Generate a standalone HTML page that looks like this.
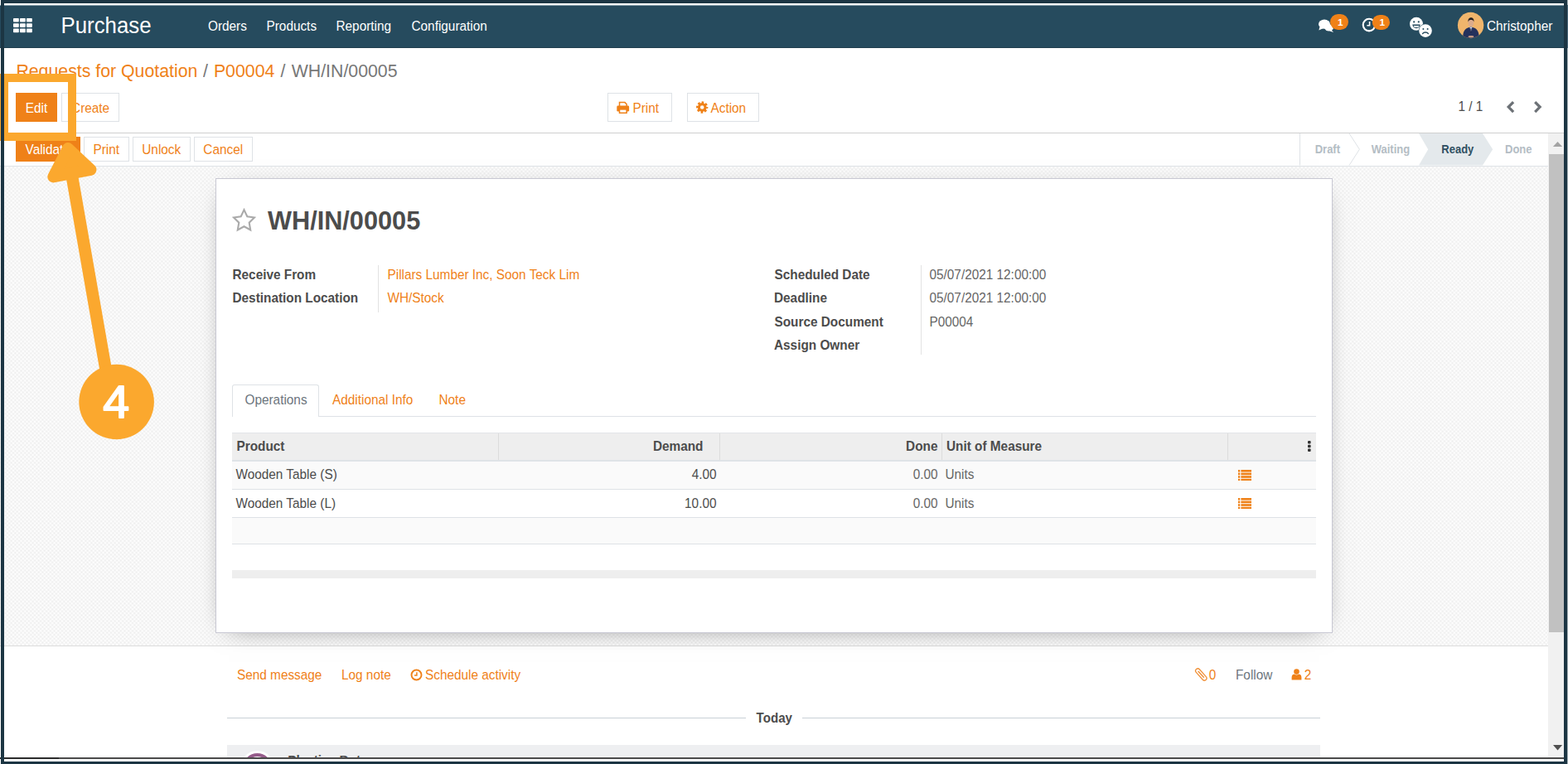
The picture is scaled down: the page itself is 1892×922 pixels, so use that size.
<!DOCTYPE html>
<html lang="en"><head><meta charset="utf-8"><title>Purchase - WH/IN/00005</title>
<style>
*{box-sizing:border-box;margin:0;padding:0}
html,body{width:1892px;height:922px;overflow:hidden;background:#fff}
body{position:relative;font-family:"Liberation Sans",Arial,Helvetica,sans-serif;color:#4c4c4c}
.b{position:absolute;display:block}
.t{position:absolute;white-space:pre;display:block}
header,section{display:contents}
.sheetbg{background-color:#f8f8f8;background-image:radial-gradient(circle,rgba(237,237,237,.95) 0,rgba(239,239,239,.6) 30%,rgba(248,248,248,0) 52%),radial-gradient(circle,rgba(237,237,237,.95) 0,rgba(239,239,239,.6) 30%,rgba(248,248,248,0) 52%),radial-gradient(circle,rgba(255,255,255,.98) 0,rgba(255,255,255,.6) 30%,rgba(248,248,248,0) 52%),radial-gradient(circle,rgba(255,255,255,.98) 0,rgba(255,255,255,.6) 30%,rgba(248,248,248,0) 52%);background-size:4.72px 4.72px;background-position:-0.5px -0.2px,1.86px 2.16px,1.86px -0.2px,-0.5px 2.16px}
</style></head>
<body>
<header class="nav">
<div class="b " style="left:0px;top:7px;width:1892.00px;height:51.00px;background:#264b5e;"></div>
<div class="b " style="left:0px;top:57px;width:1892.00px;height:1.00px;background:#1f3d4e;"></div>
<svg class="b" style="left:16.25px;top:22px" width="23" height="17.5" viewBox="0 0 23 17.5"><g fill="#fff"><rect x="0" y="0" width="6.8" height="4.6" rx="0.8"/><rect x="8" y="0" width="6.8" height="4.6" rx="0.8"/><rect x="16" y="0" width="6.8" height="4.6" rx="0.8"/><rect x="0" y="6.3" width="6.8" height="4.6" rx="0.8"/><rect x="8" y="6.3" width="6.8" height="4.6" rx="0.8"/><rect x="16" y="6.3" width="6.8" height="4.6" rx="0.8"/><rect x="0" y="12.6" width="6.8" height="4.6" rx="0.8"/><rect x="8" y="12.6" width="6.8" height="4.6" rx="0.8"/><rect x="16" y="12.6" width="6.8" height="4.6" rx="0.8"/></g></svg>
<span class="t " style="left:73.50px;top:19.00px;font-size:25.8px;line-height:25.8px;color:#fff;transform:scaleY(1.035);transform-origin:0 21px;">Purchase</span>
<span class="t " style="left:251.00px;top:24.00px;font-size:15.35px;line-height:15.35px;color:#fff;transform:scaleY(1.07);transform-origin:0 13px;">Orders</span>
<span class="t " style="left:321.50px;top:24.00px;font-size:15.35px;line-height:15.35px;color:#fff;transform:scaleY(1.07);transform-origin:0 13px;">Products</span>
<span class="t " style="left:405.50px;top:24.00px;font-size:15.35px;line-height:15.35px;color:#fff;transform:scaleY(1.07);transform-origin:0 13px;">Reporting</span>
<span class="t " style="left:496.50px;top:24.00px;font-size:15.35px;line-height:15.35px;color:#fff;transform:scaleY(1.07);transform-origin:0 13px;">Configuration</span>
<span class="t " style="left:1794.00px;top:24.00px;font-size:15.35px;line-height:15.35px;color:#fff;transform:scaleY(1.07);transform-origin:0 13px;">Christopher</span>
</header>
<section class="cp">
<nav class="crumbs" style="display:contents">
<span class="t " style="left:19.40px;top:76.00px;font-size:21.3px;line-height:21.3px;color:#ef8118;transform:scaleY(1.075);transform-origin:0 17px;">Requests for Quotation</span>
<span class="t " style="left:245.10px;top:76.00px;font-size:21.3px;line-height:21.3px;color:#777;transform:scaleY(1.075);transform-origin:0 17px;">/</span>
<span class="t " style="left:257.90px;top:76.00px;font-size:21.3px;line-height:21.3px;color:#ef8118;transform:scaleY(1.075);transform-origin:0 17px;">P00004</span>
<span class="t " style="left:338.50px;top:76.00px;font-size:21.3px;line-height:21.3px;color:#777;transform:scaleY(1.075);transform-origin:0 17px;">/</span>
<span class="t " style="left:351.70px;top:76.00px;font-size:21.3px;line-height:21.3px;color:#777;transform:scaleY(1.075);transform-origin:0 17px;">WH/IN/00005</span>
</nav>
<div class="b " style="left:19px;top:112px;width:50.00px;height:35.00px;background:#ef8118;"></div>
<span class="t " style="left:30.78px;top:123.00px;font-size:15.35px;line-height:15.35px;color:#fff;transform:scaleY(1.07);transform-origin:0 13px;">Edit</span>
<div class="b " style="left:74px;top:112px;width:69.75px;height:35.00px;border:1px solid #dee2e6;background:#fff;"></div>
<span class="t " style="left:86.09px;top:123.00px;font-size:15.35px;line-height:15.35px;color:#ef8118;transform:scaleY(1.07);transform-origin:0 13px;">Create</span>
<div class="b " style="left:733px;top:112px;width:77.50px;height:35.00px;border:1px solid #dee2e6;background:#fff;"></div>
<span class="t " style="left:763.50px;top:123.00px;font-size:15.35px;line-height:15.35px;color:#ef8118;transform:scaleY(1.07);transform-origin:0 13px;">Print</span>
<div class="b " style="left:829px;top:112px;width:87.00px;height:35.00px;border:1px solid #dee2e6;background:#fff;"></div>
<span class="t " style="left:857.50px;top:123.00px;font-size:15.35px;line-height:15.35px;color:#ef8118;transform:scaleY(1.07);transform-origin:0 13px;">Action</span>
<span class="t " style="left:1759.50px;top:121.00px;font-size:15.35px;line-height:15.35px;color:#4c4c4c;transform:scaleY(1.07);transform-origin:0 13px;">1 / 1</span>
<div class="b " style="left:0px;top:160px;width:1887.00px;height:1.00px;background:#cfcfcf;"></div>
</section>
<section class="sb">
<div class="b " style="left:19px;top:165px;width:77.50px;height:30.00px;background:#ef8118;"></div>
<span class="t " style="left:30.58px;top:173.00px;font-size:15.35px;line-height:15.35px;color:#fff;transform:scaleY(1.07);transform-origin:0 13px;">Validate</span>
<div class="b " style="left:101px;top:165px;width:54.50px;height:30.00px;border:1px solid #dee2e6;background:#fff;"></div>
<span class="t " style="left:112.47px;top:173.00px;font-size:15.35px;line-height:15.35px;color:#ef8118;transform:scaleY(1.07);transform-origin:0 13px;">Print</span>
<div class="b " style="left:160px;top:165px;width:69.50px;height:30.00px;border:1px solid #dee2e6;background:#fff;"></div>
<span class="t " style="left:171.27px;top:173.00px;font-size:15.35px;line-height:15.35px;color:#ef8118;transform:scaleY(1.07);transform-origin:0 13px;">Unlock</span>
<div class="b " style="left:234px;top:165px;width:70.50px;height:30.00px;border:1px solid #dee2e6;background:#fff;"></div>
<span class="t " style="left:245.36px;top:173.00px;font-size:15.35px;line-height:15.35px;color:#ef8118;transform:scaleY(1.07);transform-origin:0 13px;">Cancel</span>
</section>
<svg class="b" style="left:1560px;top:161px" width="308" height="39" viewBox="1560 161 308 39"><path d="M1568.5 161V199.5" stroke="#dee2e6" stroke-width="1" fill="none"/><path d="M1628 161L1640.4 180.2L1628 199.5" stroke="#dee2e6" stroke-width="1" fill="none"/><path d="M1712 161H1789L1801.2 180.2L1789 199.5H1712L1723.2 180.2Z" fill="#e4e9ec"/></svg>
<span class="t " style="left:1586.70px;top:174.00px;font-size:13.0px;line-height:13.0px;color:#b4bdc4;font-weight:700;transform:scaleY(1.07);transform-origin:0 11px;">Draft</span>
<span class="t " style="left:1654.70px;top:174.00px;font-size:13.0px;line-height:13.0px;color:#b4bdc4;font-weight:700;transform:scaleY(1.07);transform-origin:0 11px;">Waiting</span>
<span class="t " style="left:1739.30px;top:174.00px;font-size:13.0px;line-height:13.0px;color:#2f4f62;font-weight:700;transform:scaleY(1.07);transform-origin:0 11px;">Ready</span>
<span class="t " style="left:1816.00px;top:174.00px;font-size:13.0px;line-height:13.0px;color:#b4bdc4;font-weight:700;transform:scaleY(1.07);transform-origin:0 11px;">Done</span>
<div class="b sheetbg" style="left:0px;top:199.5px;width:1868.00px;height:580.00px;"></div>
<div class="b " style="left:0px;top:199.5px;width:1868.00px;height:1.00px;background:#dfe3e7;"></div>
<div class="b " style="left:0px;top:779px;width:1868.00px;height:1.00px;background:#dcdcdc;"></div>
<div class="b sheet" style="left:260px;top:215px;width:1347.50px;height:549.00px;background:#fff;border:1px solid #c8c8d3;box-shadow:0 6px 30px -16px rgba(0,0,0,.6);"></div>
<svg class="b" style="left:280px;top:251px" width="29" height="29" viewBox="0 0 29 29"><path d="M14.5 2.2L18.3 10.3L27 11.5L20.7 17.7L22.2 26.5L14.5 22.3L6.8 26.5L8.3 17.7L2 11.5L10.7 10.3Z" fill="none" stroke="#aaa" stroke-width="2.1" stroke-linejoin="miter"/></svg>
<span class="t " style="left:323.00px;top:252.00px;font-size:30.7px;line-height:30.7px;color:#4c4c4c;font-weight:700;">WH/IN/00005</span>
<span class="t " style="left:280.50px;top:324.00px;font-size:15.35px;line-height:15.35px;color:#4c4c4c;font-weight:700;transform:scaleY(1.07);transform-origin:0 13px;">Receive From</span>
<span class="t " style="left:280.50px;top:352.00px;font-size:15.35px;line-height:15.35px;color:#4c4c4c;font-weight:700;transform:scaleY(1.07);transform-origin:0 13px;">Destination Location</span>
<div class="b " style="left:456px;top:320px;width:1.00px;height:56.50px;background:#e2e2e2;"></div>
<span class="t " style="left:467.50px;top:324.00px;font-size:15.35px;line-height:15.35px;color:#ef8118;transform:scaleY(1.07);transform-origin:0 13px;">Pillars Lumber Inc, Soon Teck Lim</span>
<span class="t " style="left:467.50px;top:352.00px;font-size:15.35px;line-height:15.35px;color:#ef8118;transform:scaleY(1.07);transform-origin:0 13px;">WH/Stock</span>
<span class="t " style="left:934.50px;top:324.00px;font-size:15.35px;line-height:15.35px;color:#4c4c4c;font-weight:700;transform:scaleY(1.07);transform-origin:0 13px;">Scheduled Date</span>
<span class="t " style="left:1121.50px;top:324.00px;font-size:15.35px;line-height:15.35px;color:#666;transform:scaleY(1.07);transform-origin:0 13px;">05/07/2021 12:00:00</span>
<span class="t " style="left:934.00px;top:352.00px;font-size:15.35px;line-height:15.35px;color:#4c4c4c;font-weight:700;transform:scaleY(1.07);transform-origin:0 13px;">Deadline</span>
<span class="t " style="left:1121.50px;top:352.00px;font-size:15.35px;line-height:15.35px;color:#666;transform:scaleY(1.07);transform-origin:0 13px;">05/07/2021 12:00:00</span>
<span class="t " style="left:934.50px;top:381.00px;font-size:15.35px;line-height:15.35px;color:#4c4c4c;font-weight:700;transform:scaleY(1.07);transform-origin:0 13px;">Source Document</span>
<span class="t " style="left:1121.50px;top:381.00px;font-size:15.35px;line-height:15.35px;color:#666;transform:scaleY(1.07);transform-origin:0 13px;">P00004</span>
<span class="t " style="left:934.00px;top:409.00px;font-size:15.35px;line-height:15.35px;color:#4c4c4c;font-weight:700;transform:scaleY(1.07);transform-origin:0 13px;">Assign Owner</span>
<div class="b " style="left:1110.5px;top:320px;width:1.00px;height:108.00px;background:#e2e2e2;"></div>
<div class="b " style="left:280px;top:502px;width:1307.50px;height:1.00px;background:#dee2e6;"></div>
<div class="b " style="left:280px;top:464px;width:105.00px;height:39.00px;background:#fff;border:1px solid #dee2e6;border-bottom:0;border-radius:3px 3px 0 0;"></div>
<span class="t " style="left:295.50px;top:475.00px;font-size:15.35px;line-height:15.35px;color:#6c757d;transform:scaleY(1.07);transform-origin:0 13px;">Operations</span>
<span class="t " style="left:401.00px;top:475.00px;font-size:15.35px;line-height:15.35px;color:#ef8118;transform:scaleY(1.07);transform-origin:0 13px;">Additional Info</span>
<span class="t " style="left:529.50px;top:475.00px;font-size:15.35px;line-height:15.35px;color:#ef8118;transform:scaleY(1.07);transform-origin:0 13px;">Note</span>
<div class="b " style="left:280px;top:522px;width:1307.50px;height:33.00px;background:#eee;border-top:1px solid #e3e5e8;"></div>
<div class="b " style="left:280px;top:554.5px;width:1307.50px;height:2.50px;background:#dfe3e7;"></div>
<div class="b " style="left:601.0px;top:523px;width:1.00px;height:32.00px;background:#dcdcdc;"></div>
<div class="b " style="left:868.0px;top:523px;width:1.00px;height:32.00px;background:#dcdcdc;"></div>
<div class="b " style="left:1136.0px;top:523px;width:1.00px;height:32.00px;background:#dcdcdc;"></div>
<div class="b " style="left:1481.0px;top:523px;width:1.00px;height:32.00px;background:#dcdcdc;"></div>
<span class="t " style="left:285.50px;top:531.00px;font-size:15.35px;line-height:15.35px;color:#4c4c4c;font-weight:700;transform:scaleY(1.07);transform-origin:0 13px;">Product</span>
<span class="t " style="left:787.94px;top:531.00px;font-size:15.35px;line-height:15.35px;color:#4c4c4c;font-weight:700;transform:scaleY(1.07);transform-origin:0 13px;">Demand</span>
<span class="t " style="left:1093.12px;top:531.00px;font-size:15.35px;line-height:15.35px;color:#4c4c4c;font-weight:700;transform:scaleY(1.07);transform-origin:0 13px;">Done</span>
<span class="t " style="left:1142.00px;top:531.00px;font-size:15.35px;line-height:15.35px;color:#4c4c4c;font-weight:700;transform:scaleY(1.07);transform-origin:0 13px;">Unit of Measure</span>
<svg class="b" style="left:1577px;top:531px" width="6" height="15" viewBox="0 0 6 15"><g fill="#333"><rect x="1" y="1" width="3.6" height="3.4" rx="1"/><rect x="1" y="5.8" width="3.6" height="3.4" rx="1"/><rect x="1" y="10.6" width="3.6" height="3.4" rx="1"/></g></svg>
<div class="b " style="left:280px;top:557px;width:1307.50px;height:33.00px;background:#fafafa;"></div>
<div class="b " style="left:280px;top:590px;width:1307.50px;height:1.00px;background:#dee2e6;"></div>
<div class="b " style="left:280px;top:591px;width:1307.50px;height:33.00px;background:#fff;"></div>
<div class="b " style="left:280px;top:624px;width:1307.50px;height:1.00px;background:#dee2e6;"></div>
<div class="b " style="left:280px;top:625px;width:1307.50px;height:31.00px;background:#fafafa;"></div>
<div class="b " style="left:280px;top:656px;width:1307.50px;height:1.00px;background:#dee2e6;"></div>
<span class="t " style="left:284.50px;top:565.00px;font-size:15.35px;line-height:15.35px;color:#4c4c4c;transform:scaleY(1.07);transform-origin:0 13px;">Wooden Table (S)</span>
<span class="t " style="left:834.63px;top:565.00px;font-size:15.35px;line-height:15.35px;color:#4c4c4c;transform:scaleY(1.07);transform-origin:0 13px;">4.00</span>
<span class="t " style="left:1101.63px;top:565.00px;font-size:15.35px;line-height:15.35px;color:#666;transform:scaleY(1.07);transform-origin:0 13px;">0.00</span>
<span class="t " style="left:1140.50px;top:565.00px;font-size:15.35px;line-height:15.35px;color:#666;transform:scaleY(1.07);transform-origin:0 13px;">Units</span>
<svg class="b" style="left:1493.5px;top:567px" width="16" height="13.4" viewBox="0 0 16 13.4"><g fill="#ef8118"><rect x="0" y="0" width="2.2" height="2.6"/><rect x="3.4" y="0" width="12.6" height="2.6"/><rect x="0" y="3.6" width="2.2" height="2.6"/><rect x="3.4" y="3.6" width="12.6" height="2.6"/><rect x="0" y="7.2" width="2.2" height="2.6"/><rect x="3.4" y="7.2" width="12.6" height="2.6"/><rect x="0" y="10.8" width="2.2" height="2.6"/><rect x="3.4" y="10.8" width="12.6" height="2.6"/></g></svg>
<span class="t " style="left:284.50px;top:600.00px;font-size:15.35px;line-height:15.35px;color:#4c4c4c;transform:scaleY(1.07);transform-origin:0 13px;">Wooden Table (L)</span>
<span class="t " style="left:826.09px;top:600.00px;font-size:15.35px;line-height:15.35px;color:#4c4c4c;transform:scaleY(1.07);transform-origin:0 13px;">10.00</span>
<span class="t " style="left:1101.63px;top:600.00px;font-size:15.35px;line-height:15.35px;color:#666;transform:scaleY(1.07);transform-origin:0 13px;">0.00</span>
<span class="t " style="left:1140.50px;top:600.00px;font-size:15.35px;line-height:15.35px;color:#666;transform:scaleY(1.07);transform-origin:0 13px;">Units</span>
<svg class="b" style="left:1493.5px;top:601px" width="16" height="13.4" viewBox="0 0 16 13.4"><g fill="#ef8118"><rect x="0" y="0" width="2.2" height="2.6"/><rect x="3.4" y="0" width="12.6" height="2.6"/><rect x="0" y="3.6" width="2.2" height="2.6"/><rect x="3.4" y="3.6" width="12.6" height="2.6"/><rect x="0" y="7.2" width="2.2" height="2.6"/><rect x="3.4" y="7.2" width="12.6" height="2.6"/><rect x="0" y="10.8" width="2.2" height="2.6"/><rect x="3.4" y="10.8" width="12.6" height="2.6"/></g></svg>
<div class="b " style="left:280px;top:688px;width:1307.50px;height:10.00px;background:#eee;"></div>
<section class="chatter">
<span class="t " style="left:286.00px;top:807.00px;font-size:15.35px;line-height:15.35px;color:#ef8118;transform:scaleY(1.07);transform-origin:0 13px;">Send message</span>
<span class="t " style="left:412.00px;top:807.00px;font-size:15.35px;line-height:15.35px;color:#ef8118;transform:scaleY(1.07);transform-origin:0 13px;">Log note</span>
<svg class="b" style="left:495px;top:807px" width="15" height="15" viewBox="0 0 15 15"><circle cx="7.5" cy="7.5" r="6" fill="none" stroke="#ef8118" stroke-width="1.9"/><path d="M7.9 4.2V8.1H5" fill="none" stroke="#ef8118" stroke-width="1.5"/></svg>
<span class="t " style="left:513.00px;top:807.00px;font-size:15.35px;line-height:15.35px;color:#ef8118;transform:scaleY(1.07);transform-origin:0 13px;">Schedule activity</span>
<svg class="b" style="left:1441px;top:805px" width="17" height="18" viewBox="0 0 17 18"><g transform="translate(8.3 9) rotate(-42)" fill="none" stroke="#f0923a" stroke-width="1.35"><rect x="-2.7" y="-8.6" width="5.4" height="17.2" rx="2.7"/><path d="M0 -5.4V5.2" stroke-width="1.5"/></g></svg>
<span class="t " style="left:1458.70px;top:807.00px;font-size:15.35px;line-height:15.35px;color:#ef8118;transform:scaleY(1.07);transform-origin:0 13px;">0</span>
<span class="t " style="left:1491.00px;top:807.00px;font-size:15.35px;line-height:15.35px;color:#6c757d;transform:scaleY(1.07);transform-origin:0 13px;">Follow</span>
<svg class="b" style="left:1558px;top:807px" width="13" height="14" viewBox="0 0 13 14"><circle cx="6.5" cy="3.6" r="3.3" fill="#ef8118"/><path d="M0.6 13.6V10.2C0.6 7.6 2.6 6.6 4 6.6C4.8 7.3 5.6 7.6 6.5 7.6C7.4 7.6 8.2 7.3 9 6.6C10.4 6.6 12.4 7.6 12.4 10.2V13.6Z" fill="#ef8118"/></svg>
<span class="t " style="left:1573.80px;top:807.00px;font-size:15.35px;line-height:15.35px;color:#ef8118;transform:scaleY(1.07);transform-origin:0 13px;">2</span>
<div class="b " style="left:274px;top:866px;width:625.50px;height:1.00px;background:#c9d0d6;"></div>
<div class="b " style="left:968px;top:866px;width:625.00px;height:1.00px;background:#c9d0d6;"></div>
<span class="t " style="left:912.60px;top:859.00px;font-size:15.1px;line-height:15.1px;color:#4c4c4c;font-weight:700;transform:scaleY(1.07);transform-origin:0 13px;">Today</span>
<div class="b" style="left:274px;top:899px;width:1319px;height:15px;background:#eeeff1;overflow:hidden"><div class="b" style="left:18.9px;top:10px;width:35px;height:35px;border-radius:50%;background:#fff;border:4px solid #965c8b;box-shadow:0 0 0 3px #fff"></div><span class="t" style="left:73.2px;top:10px;font-size:15.35px;line-height:15.35px;color:#4c4c4c;font-weight:700">Plastics Bot</span></div>
</section>
<div class="b " style="left:1868px;top:161px;width:19.00px;height:753.00px;background:#f1f1f1;"></div>
<div class="b " style="left:1869px;top:186px;width:18.00px;height:577.00px;background:#c1c1c1;"></div>
<svg class="b" style="left:1868px;top:161px" width="19" height="753" viewBox="0 0 19 753"><path d="M5.9 16L11.5 10L17.1 16Z" fill="#a3a3a3"/><path d="M6 738.1L17.1 738.1L11.55 744.5Z" fill="#505050"/></svg>
<div class="b " style="left:0px;top:914px;width:1887.00px;height:2.00px;background:#4a4a4a;"></div>
<div class="b " style="left:0px;top:914px;width:71.00px;height:2.00px;background:#2b2b2b;"></div>
<div class="b " style="left:0px;top:916px;width:1892.00px;height:6.00px;background:#fff;"></div>
<svg class="b" style="left:1585px;top:10px" width="210" height="44" viewBox="1585 10 210 44"><g fill="#fff"><ellipse cx="1598" cy="29.2" rx="7" ry="5.6"/><path d="M1592.4 32.5L1591.4 36.6L1596.4 34.2Z"/><ellipse cx="1603.6" cy="33.4" rx="5.4" ry="4.2"/><path d="M1606.5 36.2L1609.2 39L1604.4 37.6Z"/></g><rect x="1605" y="17" width="22" height="19" rx="9.5" fill="#ef8118"/><circle cx="1652" cy="30.1" r="7.3" fill="none" stroke="#fff" stroke-width="2.1"/><path d="M1652.6 26V30.8H1649.4" fill="none" stroke="#fff" stroke-width="1.6"/><rect x="1655.8" y="17.9" width="21.2" height="18.1" rx="9" fill="#ef8118"/><circle cx="1709" cy="28.8" r="8" fill="#fff"/><g fill="#264b5e"><circle cx="1706.2" cy="26.4" r="1.1"/><circle cx="1711.8" cy="26.4" r="1.1"/><path d="M1704.2 29.6H1713.8C1713.4 32.6 1711.4 34.2 1709 34.2C1706.6 34.2 1704.6 32.6 1704.2 29.6Z"/></g><path d="M1705.6 30.9H1712.4C1712 32.4 1710.6 33.1 1709 33.1C1707.4 33.1 1706 32.4 1705.6 30.9Z" fill="#fff"/><circle cx="1720" cy="37.1" r="8.4" fill="#264b5e"/><circle cx="1720" cy="37.1" r="7.8" fill="#fff"/><g fill="#264b5e"><circle cx="1717.4" cy="35" r="1"/><circle cx="1722.6" cy="35" r="1"/></g><path d="M1716.6 40.6C1717.8 38.4 1722.2 38.4 1723.4 40.6" fill="none" stroke="#264b5e" stroke-width="1.4" stroke-linecap="round"/><clipPath id="av"><circle cx="1774.6" cy="30.5" r="15.7"/></clipPath><g clip-path="url(#av)"><rect x="1758" y="14" width="34" height="34" fill="#f0b56c"/><path d="M1765.2 47.5C1764.8 40.5 1766.2 36 1770.6 33.8L1774.8 32.2L1779.2 33.8C1783.6 36 1785 40.5 1784.6 47.5Z" fill="#24315c"/><path d="M1773.3 32.6L1774.9 38.4L1776.5 32.6Z" fill="#c9d0e2"/><path d="M1774.9 34.2V39.5" stroke="#1a2140" stroke-width="0.9"/><ellipse cx="1774.9" cy="27.6" rx="3.3" ry="4.5" fill="#dcab8c"/><path d="M1771.5 26.4C1771.1 22.6 1773 21.2 1775 21.2C1777.1 21.2 1778.8 22.6 1778.4 26.4C1777.8 24.6 1776.8 24 1775 24C1773.2 24 1772.1 24.6 1771.5 26.4Z" fill="#2a2220"/><ellipse cx="1775" cy="44.3" rx="3.4" ry="1.2" fill="#c99b80"/></g></svg>
<span class="t " style="left:1614.00px;top:22.00px;font-size:11.8px;line-height:11.8px;color:#fff;font-weight:700;transform:scaleY(1.0);transform-origin:0 9px;">1</span>
<span class="t " style="left:1664.40px;top:22.00px;font-size:11.8px;line-height:11.8px;color:#fff;font-weight:700;transform:scaleY(1.0);transform-origin:0 9px;">1</span>
<svg class="b" style="left:743px;top:121px" width="18" height="17" viewBox="743 121 18 17"><path d="M747.5 128.4V123.6H754L756.1 125.7V128.4" fill="#fff" stroke="#ef8118" stroke-width="1.5"/><rect x="744.3" y="127.6" width="14.8" height="7" rx="1.4" fill="#ef8118"/><rect x="747.5" y="131.9" width="8.6" height="4.4" fill="#fff" stroke="#ef8118" stroke-width="1.5"/></svg>
<svg class="b" style="left:838px;top:120px" width="19" height="19" viewBox="838 120 19 19"><circle cx="847.2" cy="129.5" r="5.7" fill="none" stroke="#ef8118" stroke-width="2.9" stroke-dasharray="2.507 1.970" stroke-dashoffset="1.253"/><circle cx="847.2" cy="129.5" r="3.85" fill="none" stroke="#ef8118" stroke-width="3.1"/></svg>
<svg class="b" style="left:1815px;top:119px" width="50" height="21" viewBox="1815 119 50 21"><g fill="none" stroke="#6c7176" stroke-width="3.2" stroke-linejoin="miter"><path d="M1826.1 123.1L1820.2 129.1L1826.1 135.1"/><path d="M1852.2 123.1L1858.1 129.1L1852.2 135.1"/></g></svg>
<div class="b" style="left:0;top:89px;width:92px;height:81px;border:10px solid #fba82e;"></div>
<svg class="b" style="left:0;top:160px" width="200" height="380" viewBox="0 160 200 380"><path d="M85.9 207L132.9 476" stroke="#fba82e" stroke-width="14.7" fill="none"/><path d="M82.05 179L64.3 213.4L109.5 204.9Z" fill="#fba82e" stroke="#fba82e" stroke-width="14" stroke-linejoin="round"/><circle cx="140.6" cy="485" r="45.3" fill="#fba82e"/></svg>
<svg class="b" style="left:95px;top:439px" width="92" height="92" viewBox="95 439 92 92"><text x="0" y="0" transform="translate(124.2 503.7) scale(1.03 1)" font-family="Liberation Sans, Arial, sans-serif" font-size="55.5" fill="#fff" stroke="#fff" stroke-width="1.9" stroke-linejoin="round" stroke-linecap="round">4</text></svg>
<div class="b " style="left:0px;top:4px;width:1892.00px;height:2.00px;background:#fff;"></div>
<div class="b " style="left:0px;top:6px;width:1892.00px;height:1.00px;background:#8aa0ab;"></div>
<div class="b " style="left:1px;top:0px;width:1890.00px;height:4.00px;background:#1c3543;"></div>
<div class="b " style="left:1px;top:0px;width:4.00px;height:922.00px;background:#1c3543;"></div>
<div class="b " style="left:1887px;top:0px;width:4.00px;height:922.00px;background:#1c3543;"></div>
<div class="b " style="left:1px;top:919px;width:1890.00px;height:3.00px;background:#1c3543;"></div>
<div class="b " style="left:0px;top:0px;width:1.00px;height:6.00px;background:#fff;"></div>
<div class="b " style="left:1891px;top:0px;width:1.00px;height:922.00px;background:#a9b4ba;"></div>
<div class="b " style="left:1891px;top:6px;width:1.00px;height:52.00px;background:#48677a;"></div>
</body></html>
